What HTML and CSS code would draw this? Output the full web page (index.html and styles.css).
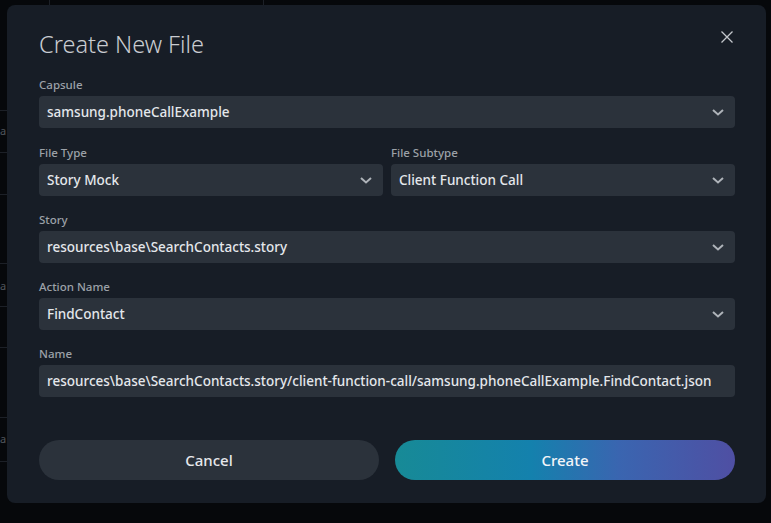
FILE: index.html
```html
<!DOCTYPE html>
<html lang="en">
<head>
<meta charset="utf-8">
<title>Create New File</title>
<link rel="stylesheet" href="styles.css">
</head>
<body>
<div class="backdrop">
  <span class="bg-a bg-a1">a</span>
  <span class="bg-a bg-a2">a</span>
  <span class="bg-a bg-a3">a</span>
</div>
<div class="modal" role="dialog" aria-labelledby="title">
  <div class="header">
    <h1 id="title" class="title">Create New File</h1>
    <button class="close" aria-label="Close">
      <svg width="12" height="12" viewBox="0 0 12 12"><path d="M0.5 0.5 L11.5 11.5 M11.5 0.5 L0.5 11.5" stroke="#c3c7cc" stroke-width="1.3" fill="none"/></svg>
    </button>
  </div>
  <div class="form">
    <div class="field field-first">
      <label class="label">Capsule</label>
      <div class="select"><span class="value">samsung.phoneCallExample</span><svg class="chev" width="12" height="7" viewBox="0 0 12 7"><path d="M1 1 L6 5.5 L11 1" stroke="#aeb3b9" stroke-width="2" fill="none"/></svg></div>
    </div>
    <div class="row">
      <div class="field">
        <label class="label">File Type</label>
        <div class="select"><span class="value">Story Mock</span><svg class="chev" width="12" height="7" viewBox="0 0 12 7"><path d="M1 1 L6 5.5 L11 1" stroke="#aeb3b9" stroke-width="2" fill="none"/></svg></div>
      </div>
      <div class="field">
        <label class="label">File Subtype</label>
        <div class="select"><span class="value">Client Function Call</span><svg class="chev" width="12" height="7" viewBox="0 0 12 7"><path d="M1 1 L6 5.5 L11 1" stroke="#aeb3b9" stroke-width="2" fill="none"/></svg></div>
      </div>
    </div>
    <div class="field">
      <label class="label">Story</label>
      <div class="select"><span class="value">resources\base\SearchContacts.story</span><svg class="chev" width="12" height="7" viewBox="0 0 12 7"><path d="M1 1 L6 5.5 L11 1" stroke="#aeb3b9" stroke-width="2" fill="none"/></svg></div>
    </div>
    <div class="field">
      <label class="label">Action Name</label>
      <div class="select"><span class="value">FindContact</span><svg class="chev" width="12" height="7" viewBox="0 0 12 7"><path d="M1 1 L6 5.5 L11 1" stroke="#aeb3b9" stroke-width="2" fill="none"/></svg></div>
    </div>
    <div class="field">
      <label class="label">Name</label>
      <div class="select input"><span class="value">resources\base\SearchContacts.story/client-function-call/samsung.phoneCallExample.FindContact.json</span></div>
    </div>
  </div>
  <div class="actions">
    <button class="btn btn-cancel">Cancel</button>
    <button class="btn btn-create">Create</button>
  </div>
</div>
</body>
</html>
```
FILE: styles.css
```css
html, body {
  margin: 0;
  padding: 0;
}
body {
  width: 771px;
  height: 523px;
  overflow: hidden;
  background: #06080b;
  font-family: "Noto Sans", "Open Sans", sans-serif;
  position: relative;
}
.backdrop {
  position: absolute;
  inset: 0;
  background-image:
    linear-gradient(#1c2027, #1c2027),
    linear-gradient(#1c2027, #1c2027),
    linear-gradient(to bottom, transparent 110px, #1c2027 110px, #1c2027 111px, transparent 111px,
      transparent 152px, #1c2027 152px, #1c2027 153px, transparent 153px,
      transparent 194px, #1c2027 194px, #1c2027 195px, transparent 195px,
      transparent 263px, #1c2027 263px, #1c2027 264px, transparent 264px,
      transparent 306px, #1c2027 306px, #1c2027 307px, transparent 307px,
      transparent 347px, #1c2027 347px, #1c2027 348px, transparent 348px,
      transparent 417px, #1c2027 417px, #1c2027 418px, transparent 418px,
      transparent 461px, #1c2027 461px, #1c2027 462px, transparent 462px);
  background-size: 1px 6px, 1px 6px, 8px 523px;
  background-position: 49px 0, 263px 0, 0 0;
  background-repeat: no-repeat;
}
.bg-a {
  position: absolute;
  left: 0;
  font-size: 11px;
  color: #50555c;
  font-family: "Noto Sans", sans-serif;
  line-height: 14px;
}
.bg-a1 { top: 124px; }
.bg-a2 { top: 279px; }
.bg-a3 { top: 432px; }

.modal {
  position: absolute;
  left: 7px;
  top: 5px;
  width: 759px;
  height: 498px;
  box-sizing: border-box;
  background: #171d26;
  border-radius: 8px;
  padding: 23px 31px 23px 32px;
  display: flex;
  flex-direction: column;
}
.header {
  display: flex;
  justify-content: space-between;
  align-items: flex-start;
  height: 32px;
  margin-bottom: 16px;
}
.title {
  margin: 0;
  font-size: 23.5px;
  line-height: 32px;
  font-weight: 300;
  color: #c9ccd1;
}
.close {
  background: none;
  border: 0;
  padding: 0;
  margin: 3px 2px 0 0;
  width: 12px;
  height: 12px;
  display: flex;
  cursor: pointer;
}
.form {
  display: flex;
  flex-direction: column;
  gap: 15px;
}
.field-first {
  margin-bottom: 1px;
}
.row {
  display: grid;
  grid-template-columns: 1fr 1fr;
  gap: 8px;
}
.field {
  display: flex;
  flex-direction: column;
  gap: 2px;
}
.label {
  font-size: 11.5px;
  line-height: 18px;
  color: #9ca1a8;
  font-weight: 500;
}
.select {
  height: 32px;
  box-sizing: border-box;
  background: #2b323b;
  border-radius: 4px;
  padding: 0 11px 0 8px;
  display: flex;
  align-items: center;
  justify-content: space-between;
}
.value {
  font-size: 13.5px;
  font-weight: 500;
  color: #e4e7eb;
  white-space: nowrap;
}
.chev {
  flex: none;
}
.actions {
  margin-top: auto;
  display: grid;
  grid-template-columns: 1fr 1fr;
  gap: 16px;
}
.btn {
  height: 40px;
  border: 0;
  border-radius: 20px;
  font-family: inherit;
  font-size: 15px;
  font-weight: 500;
  padding: 0 0 1px;
  cursor: pointer;
}
.btn-cancel {
  background: #2b323b;
  color: #e6e8eb;
}
.btn-create {
  background: linear-gradient(to right, #178a96 0%, #1481ad 40%, #3a65b0 66%, #4f4fa3 100%);
  color: #f3f5f8;
}
```
